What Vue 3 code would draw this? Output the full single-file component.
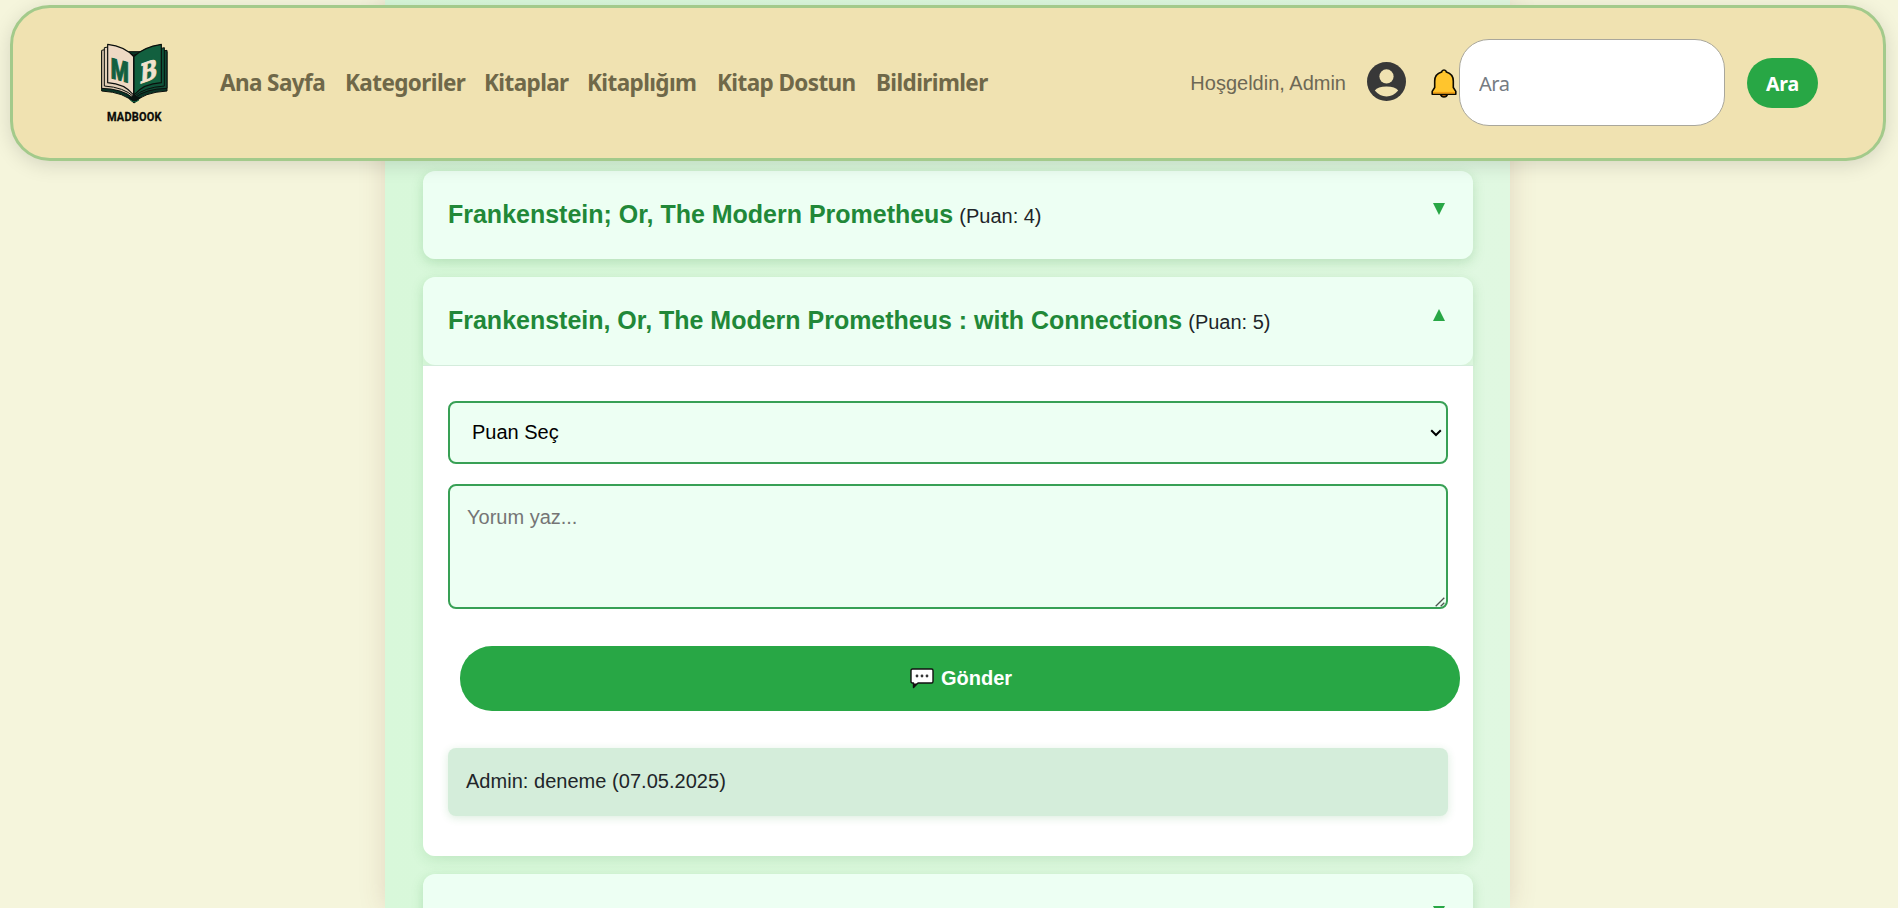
<script setup>
import { ref } from 'vue'

const links = [
  { label: 'Ana Sayfa', cls: 'l1' },
  { label: 'Kategoriler', cls: 'l2' },
  { label: 'Kitaplar', cls: 'l3' },
  { label: 'Kitaplığım', cls: 'l4' },
  { label: 'Kitap Dostun', cls: 'l5' },
  { label: 'Bildirimler', cls: 'l6' }
]

const books = ref([
  { title: 'Frankenstein; Or, The Modern Prometheus', score: 4, open: false },
  {
    title: 'Frankenstein, Or, The Modern Prometheus : with Connections',
    score: 5,
    open: true,
    comments: ['Admin: deneme (07.05.2025)']
  },
  { title: '', score: null, open: false }
])
</script>

<template>
  <div class="page">
    <header class="navbar">
      <svg class="logo" viewBox="0 0 270 285">
        <path d="M35 50 L35 168 Q105 172 132 204 Q160 172 231 168 L231 50 Z" fill="#0a3527" stroke="#0a0f0c" stroke-width="3" stroke-linejoin="round" />
        <path d="M35 46 L35 160 Q98 162 128 188 L128 60 L44 44 Z" fill="#dcc9b0" stroke="#0a0f0c" stroke-width="3" />
        <path d="M43 38 L43 153 Q102 157 131 185 L131 60 L54 36 Z" fill="#e2cfb8" stroke="#0a0f0c" stroke-width="3" />
        <path d="M231 46 L231 160 Q165 162 135 188 L135 60 Z" fill="#0f4a35" stroke="#0a0f0c" stroke-width="3" />
        <path d="M223 38 L223 153 Q162 157 132 185 L132 60 Z" fill="#0f5239" stroke="#0a0f0c" stroke-width="3" />
        <path d="M53 28 Q105 34 131 65 L131 180 Q104 146 53 143 Z" fill="#eed9c4" stroke="#0a0f0c" stroke-width="3.500" stroke-linejoin="round" />
        <path d="M214 28 Q160 36 132 65 L132 180 Q160 146 214 143 Z" fill="#12603f" stroke="#0a0f0c" stroke-width="3.500" stroke-linejoin="round" />
        <path d="M112 187 Q126 188 132 180 Q140 188 155 187 L133 205 Z" fill="#07140f" />
        <path d="M121 195 Q133 206 147 195" fill="none" stroke="#126b49" stroke-width="3" />
        <text class="glyph" transform="matrix(1 .27 0 1 62 129)" fill="#126040" stroke="#126040" font-size="85" textLength="54" lengthAdjust="spacingAndGlyphs">M</text>
        <text class="glyph slab" transform="matrix(1 -.36 -.05 1 149 146)" fill="#f2e2cd" stroke="#f2e2cd" font-size="80" textLength="51" lengthAdjust="spacingAndGlyphs">B</text>
        <text class="brand" transform="matrix(.8 0 0 1 51 257)" font-size="41" textLength="204" lengthAdjust="spacing">MADBOOK</text>
      </svg>

      <nav class="links">
        <a v-for="l in links" :key="l.label" :class="l.cls">{{ l.label }}</a>
      </nav>

      <div class="right">
        <span class="welcome">Hoşgeldin, Admin</span>
        <svg class="avatar" viewBox="0 0 40 40">
          <circle cx="20" cy="20" r="20" fill="#383838" />
          <circle cx="20" cy="14.8" r="7.3" fill="#f0e2b1" />
          <path d="M8 29.3 Q11 25 20 25 Q29 25 32 29.3 Q27 35.3 20 35.3 Q13 35.3 8 29.3 Z" fill="#f0e2b1" />
        </svg>
        <svg class="bell" viewBox="0 0 26 29">
          <path d="M9.3 25 Q10.3 28 13 28 Q15.700 28 16.700 25 Z" fill="#b8690a" stroke="#0d0a00" stroke-width="1.500" />
          <path d="M1.200 25.300 V22.400 L3.700 18.500 V12 Q3.700 5 10.600 3 Q11 1 13 1 Q15 1 15.400 3 Q22.300 5 22.300 12 V18.500 L24.800 22.400 V25.300 Z" fill="#ffc52d" stroke="#0d0a00" stroke-width="1.600" stroke-linejoin="round" />
          <path d="M2 22.900 H24 V24.500 H2 Z" fill="#f2a014" />
        </svg>
        <input class="search" type="text" placeholder="Ara" />
        <button class="search-btn">Ara</button>
      </div>
    </header>

    <main class="container">
      <section v-for="(b, i) in books" :key="i" class="book">
        <div class="head" @click="b.open = !b.open">
          <div class="title"><template v-if="b.title"><strong>{{ b.title }}</strong><span class="score">(Puan: {{ b.score }})</span></template></div>
          <svg class="arrow" viewBox="0 0 12 12">
            <path :d="b.open ? 'M6 0 L12 12 H0 Z' : 'M0 0 H12 L6 12 Z'" fill="#28a745" />
          </svg>
        </div>
        <div v-if="b.open" class="body">
          <div class="wrap">
            <select class="field rate">
              <option>Puan Seç</option>
            </select>
            <svg class="chevron" viewBox="0 0 12 8">
              <path d="M1.200 1.200 L6 6 L10.800 1.200" fill="none" stroke="#000" stroke-width="2" />
            </svg>
          </div>
          <div class="wrap second">
            <textarea class="field note" placeholder="Yorum yaz..."></textarea>
            <svg class="grip" viewBox="0 0 10 10">
              <path d="M0.700 9.300 L9.300 0.700 M5.700 9.300 L9.300 5.700" fill="none" stroke="#4d554f" stroke-width="1.300" />
            </svg>
          </div>
          <button class="send">
            <svg viewBox="0 0 24 21">
              <path d="M2.500 1 H21.500 Q23 1 23 2.500 V13.500 Q23 15 21.500 15 H8 L3.500 19.500 V15 H2.500 Q1 15 1 13.500 V2.500 Q1 1 2.500 1 Z" fill="#fff" stroke="#111" stroke-width="1.400" stroke-linejoin="round" />
              <path d="M3 15.500 H7.500 L3.500 20 Z" fill="#111" />
              <circle cx="7" cy="8" r="1.400" fill="#333" /><circle cx="12" cy="8" r="1.400" fill="#333" /><circle cx="17" cy="8" r="1.400" fill="#333" />
            </svg>
            <span>Gönder</span>
          </button>
          <p v-for="c in b.comments" :key="c" class="comment">{{ c }}</p>
        </div>
      </section>
    </main>
  </div>
</template>

<style>
body {
  background: #fdfdfb;
  overflow: hidden;
}
</style>

<style scoped>
* {
  box-sizing: border-box;
}
.page {
  position: relative;
  width: 1898px;
  height: 908px;
  overflow: hidden;
  background: #f5f5dc;
  font-family: "Liberation Sans", Arial, sans-serif;
  font-size: 20px;
  color: #212529;
}
.navbar {
  position: absolute;
  z-index: 2;
  top: 5px;
  left: 10px;
  width: 1876px;
  height: 156px;
  display: flex;
  align-items: center;
  padding: 0 65px 0 77px;
  background: #f0e2b1;
  border: 3px solid #a3ca8b;
  border-radius: 40px;
  box-shadow: 0 4px 20px rgba(0, 0, 0, 0.13);
}
.logo {
  flex: none;
  width: 90px;
  height: 95px;
  margin-bottom: 1px;
}
.glyph {
  font-family: "Roboto", sans-serif;
  font-weight: 900;
  stroke-width: 3px;
}
.glyph.slab {
  font-family: "DejaVu Serif", serif;
  font-weight: 700;
}
.brand {
  font-family: "Roboto", sans-serif;
  font-weight: 700;
  fill: #0b0b08;
  stroke: #0b0b08;
  stroke-width: 1px;
}
.links {
  display: flex;
  margin: 0 0 1px 40px;
  font-family: "Noto Sans", sans-serif;
  font-weight: 700;
  font-size: 22.5px;
  line-height: 30px;
  color: #6f6849;
  white-space: nowrap;
}
.links a {
  flex: none;
  letter-spacing: -0.6px;
}
.l1 { width: 125px; }
.l2 { width: 139px; }
.l3 { width: 103px; }
.l4 { width: 130px; }
.l5 { width: 159px; }
.l6 { width: 120px; }
.right {
  display: flex;
  align-items: center;
  margin-left: auto;
}
.welcome {
  color: #6d6855;
}
.avatar {
  width: 39px;
  height: 39px;
  margin: 0 25px 4px 21px;
}
.bell {
  width: 26px;
  height: 29px;
  margin: 1px 2px 0 0;
}
.search {
  width: 266px;
  height: 87px;
  margin: 0 22px 1px 0;
  padding: 2px 19px 0;
  border: 1px solid #a9a79c;
  border-radius: 30px;
  background: #fff;
  font: 20px "Noto Sans", sans-serif;
  letter-spacing: -0.5px;
}
.search::placeholder {
  color: #757b82;
}
.search-btn {
  width: 71px;
  height: 50px;
  padding: 1px 0 0;
  border: 0;
  border-radius: 25px;
  background: #28a745;
  color: #fff;
  font: 700 19.5px "Noto Sans", sans-serif;
  letter-spacing: -0.2px;
}
.container {
  width: 1125px;
  height: 908px;
  margin-left: 385px;
  padding: 171px 37px 0 38px;
  background: linear-gradient(90deg, #d8f8da, #e0f8e1);
  box-shadow: 0 0 25px rgba(130, 70, 60, 0.17);
}
.book {
  margin-bottom: 18px;
  border-radius: 12px;
  box-shadow: 0 4px 14px rgba(40, 140, 50, 0.14);
}
.head {
  display: flex;
  justify-content: space-between;
  height: 88px;
  padding: 27px 28px 0 25px;
  background: #edfff3;
  border-radius: 12px;
  box-shadow: 0 3px 8px rgba(40, 140, 50, 0.06);
}
.title {
  line-height: 32px;
  white-space: nowrap;
}
.title strong {
  font-size: 25px;
  letter-spacing: -0.01px;
  color: #218838;
}
.score {
  margin-left: 6px;
}
.arrow {
  width: 12px;
  height: 12px;
  margin-top: 5px;
}
.body {
  display: flex;
  flex-direction: column;
  height: 491px;
  padding: 35px 25px 0;
  background: #fff;
  border-top: 1px solid #d4ecdc;
  border-radius: 0 0 12px 12px;
}
.wrap {
  position: relative;
  width: 1000px;
}
.second {
  margin-top: 20px;
}
.chevron {
  position: absolute;
  right: 6px;
  top: 28px;
  width: 12px;
  height: 8px;
  pointer-events: none;
}
.grip {
  position: absolute;
  right: 3px;
  bottom: 2px;
  width: 10px;
  height: 10px;
  pointer-events: none;
}
.field {
  display: block;
  width: 1000px;
  margin: 0;
  border: 2px solid #38a055;
  border-radius: 8px;
  background: #edfff3;
  font: 20px "Liberation Sans", Arial, sans-serif;
  outline: none;
}
.rate {
  height: 63px;
  padding: 0 0 2px 22px;
  color: #000;
  appearance: none;
}
.note {
  height: 125px;
  padding: 20px 17px;
  resize: none;
}
.note::placeholder {
  color: #757575;
}
.send {
  display: flex;
  align-items: center;
  justify-content: center;
  flex: none;
  gap: 7px;
  width: 1000px;
  height: 65px;
  margin: 37px 0 0 12px;
  padding: 0 0 1px 2px;
  border: 0;
  border-radius: 32px;
  background: #28a745;
  color: #fff;
  font: 700 20px "Liberation Sans", Arial, sans-serif;
}
.send svg {
  width: 24px;
  height: 21px;
}
.comment {
  width: 1000px;
  height: 68px;
  margin: 37px 0 0;
  padding: 0 18px;
  line-height: 67px;
  letter-spacing: 0.03px;
  background: #d4edda;
  border-radius: 8px;
  box-shadow: 0 2px 8px rgba(40, 140, 50, 0.16);
}
</style>
